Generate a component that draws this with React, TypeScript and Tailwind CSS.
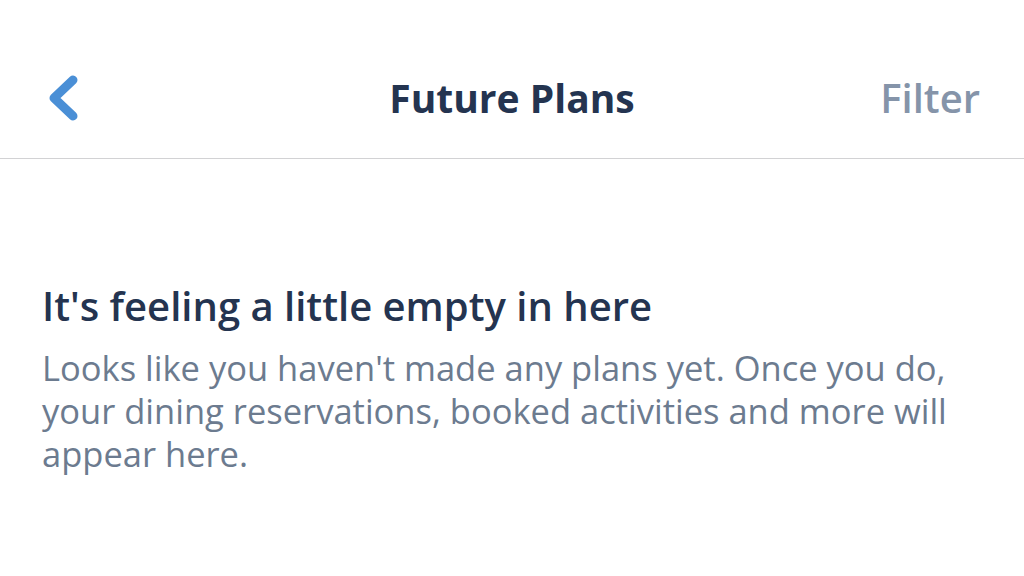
import React from 'react';

const App: React.FC = () => {
  return (
    <div className="w-[1024px] h-[576px] bg-white overflow-hidden" style={{ fontFamily: '"Open Sans", "Noto Sans", sans-serif' }}>
      {/* Header */}
      <div className="h-[159px] border-b border-[#d2d2d4] grid grid-cols-[1fr_auto_1fr] items-center pl-[46px] pr-[44px] pt-[38px]">
        <button className="w-[40px] h-[48px] flex items-center">
          <svg width="36" height="48" viewBox="0 0 36 48" fill="none">
            <path d="M27 6L8 24l19 18" stroke="#4a8fd6" strokeWidth="9" strokeLinecap="round" strokeLinejoin="round" />
          </svg>
        </button>
        <h1 className="text-[39px] font-bold text-[#243450] mr-[2px]">Future Plans</h1>
        <span className="justify-self-end text-[40px] font-semibold text-[#8594a9]">Filter</span>
      </div>

      {/* Empty state */}
      <div className="pl-[42px] pt-[123px]">
        <h2 className="text-[40px] font-semibold text-[#243450] leading-[48px]">It's feeling a little empty in here</h2>
        <p className="mt-[16px] w-[925px] text-[34.5px] text-[#6c7b8f] leading-[43px]">
          Looks like you haven't made any plans yet. Once you do, your dining reservations, booked activities and more will appear here.
        </p>
      </div>
    </div>
  );
};

export default App;
